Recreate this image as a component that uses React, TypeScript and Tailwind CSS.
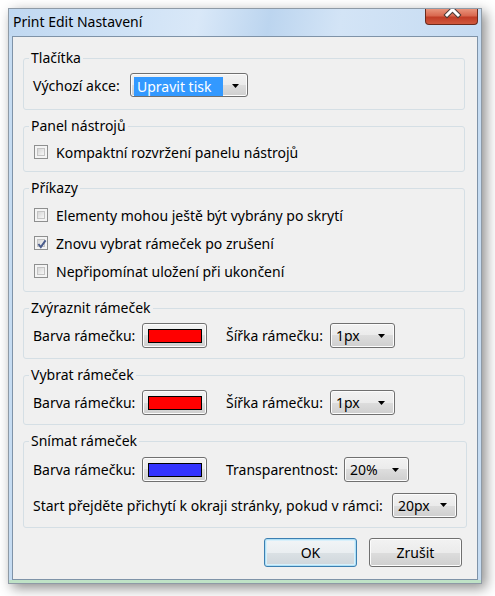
import React from "react";

// Vista-style button face, shared by the colour pickers and drop-downs
const face =
  "rounded-[3px] border border-[#707070] bg-[linear-gradient(180deg,#f2f2f2_0%,#ebebeb_50%,#dddddd_50%,#cfcfcf_100%)] shadow-[inset_0_0_0_1px_#fcfcfc]";

function Arrow() {
  return (
    <svg width="7" height="4" viewBox="0 0 7 4" className="shrink-0">
      <polygon points="0,0 7,0 3.5,4" fill="#000" />
    </svg>
  );
}

function Checkbox({ checked }: { checked?: boolean }) {
  return (
    <div className="ml-[1px] flex h-[14px] w-[14px] shrink-0 items-center justify-center border border-[#8e8f8f] bg-[#f4f4f4] p-[2px]">
      <div className="relative h-full w-full border border-[#c4c4c4] bg-[linear-gradient(135deg,#d6d6d6_0%,#f7f7f7_100%)]">
        {checked && (
          <svg width="14" height="14" viewBox="0 0 14 14" className="absolute left-[-3px] top-[-3px]">
            <path d="M3.4 7 L5.8 10 L10.6 3.4" fill="none" stroke="#4a5c8c" strokeWidth="2" />
          </svg>
        )}
      </div>
    </div>
  );
}

function ColorButton({ color }: { color: string }) {
  return (
    <div className={`${face} flex h-[25px] w-[65px] shrink-0 items-center justify-center`}>
      <div className="h-[14px] w-[54px] border border-black" style={{ background: color }} />
    </div>
  );
}

function Dropdown({ value, width }: { value: string; width: string }) {
  return (
    <div className={`${face} flex h-[25px] shrink-0 items-center justify-between pl-[5px] pr-[9px] ${width}`}>
      <span>{value}</span>
      <Arrow />
    </div>
  );
}

function Group({ title, children, className }: { title: string; children: React.ReactNode; className: string }) {
  return (
    <fieldset className={`rounded-[3px] border border-[#d5dfe5] ${className}`}>
      <legend className="ml-[5px] px-[2px] leading-4">{title}</legend>
      <div className="px-[9px]">{children}</div>
    </fieldset>
  );
}

function CheckRow({ label, checked }: { label: string; checked?: boolean }) {
  return (
    <div className="flex h-[18px] items-center gap-[8px]">
      <Checkbox checked={checked} />
      <span>{label}</span>
    </div>
  );
}

function FrameRow({ color, label, value, labelW, selectW }: { color: string; label: string; value: string; labelW: string; selectW: string }) {
  return (
    <div className="flex h-[25px] items-center">
      <span className="w-[109px] shrink-0">Barva rámečku:</span>
      <ColorButton color={color} />
      <span className={`ml-[19px] shrink-0 ${labelW}`}>{label}</span>
      <Dropdown value={value} width={selectW} />
    </div>
  );
}

export default function App() {
  return (
    <div className="min-h-[596px] bg-white pl-[8px] pt-[8px] font-['Noto_Sans',sans-serif] text-[14px] text-black">
      <div className="flex w-[474px] flex-col border border-[#8e9aa6] bg-[#c6dcf2] shadow-[4px_4px_12px_rgba(0,0,0,0.45)]">
        {/* Title bar */}
        <div className="flex h-[27px] items-start justify-between bg-[linear-gradient(100deg,#c0d8f1_0%,#cfe2f6_25%,#d9e8f8_40%,#bcd5ef_55%,#d3e4f6_70%,#c5dbf2_100%)]">
          <span className="pl-[4px] pt-[4px] leading-[18px]">Print Edit Nastavení</span>
          <div className="mr-[3px] h-[16px] w-[53px] overflow-hidden rounded-b-[4px] border border-t-0 border-[#6b2a1c] bg-[linear-gradient(180deg,#e9947c_0%,#d9684f_45%,#c13d26_55%,#d0583d_100%)]">
            <svg width="53" height="16" viewBox="0 0 53 16">
              <path d="M21 -5 L32 6 M32 -5 L21 6" stroke="#4a3a36" strokeWidth="5" strokeLinecap="square" />
              <path d="M21 -5 L32 6 M32 -5 L21 6" stroke="#ffffff" strokeWidth="3" strokeLinecap="square" />
            </svg>
          </div>
        </div>

        {/* Client area */}
        <div className="mx-[3px] flex flex-col border border-[#7f93a8] bg-[#f0f0f0] pb-[12px] pl-[10px] pr-[12px] pt-[13px]">
          <div className="flex flex-col gap-2">
            <Group title="Tlačítka" className="pb-[12px] pt-[7px]">
              <div className="flex h-[24px] items-center">
                <span className="w-[97px] shrink-0">Výchozí akce:</span>
                <div className={`${face} flex h-[24px] w-[118px] items-stretch pl-[3px] pt-[3px]`}>
                  <div className="flex w-[89px] items-center bg-[#3399ff] pl-[3px] text-white">Upravit tisk</div>
                  <div className="flex flex-1 items-center justify-center pb-[2px]">
                    <Arrow />
                  </div>
                </div>
              </div>
            </Group>

            <Group title="Panel nástrojů" className="pb-[10px] pt-[9px]">
              <CheckRow label="Kompaktní rozvržení panelu nástrojů" />
            </Group>

            <Group title="Příkazy" className="pb-[11px] pt-[10px]">
              <div className="flex flex-col gap-[10px]">
                <CheckRow label="Elementy mohou ještě být vybrány po skrytí" />
                <CheckRow label="Znovu vybrat rámeček po zrušení" checked />
                <CheckRow label="Nepřipomínat uložení při ukončení" />
              </div>
            </Group>

            <Group title="Zvýraznit rámeček" className="pb-[10px] pt-[7px]">
              <FrameRow color="#ff0000" label="Šířka rámečku:" value="1px" labelW="w-[104px]" selectW="w-[65px]" />
            </Group>

            <Group title="Vybrat rámeček" className="pb-[9px] pt-[7px]">
              <FrameRow color="#ff0000" label="Šířka rámečku:" value="1px" labelW="w-[104px]" selectW="w-[65px]" />
            </Group>

            <Group title="Snímat rámeček" className="pb-[10px] pt-[8px]">
              <div className="flex flex-col gap-[11px]">
                <FrameRow color="#3333ff" label="Transparentnost:" value="20%" labelW="w-[118px]" selectW="w-[65px]" />
                <div className="flex h-[24px] items-center">
                  <span className="w-[359px] shrink-0">Start přejděte přichytí k okraji stránky, pokud v rámci:</span>
                  <Dropdown value="20px" width="w-[65px]" />
                </div>
              </div>
            </Group>
          </div>

          {/* Dialog buttons */}
          <div className="mt-[10px] flex justify-end gap-[12px] pr-[3px]">
            <button className="h-[29px] w-[93px] rounded-[3px] border border-[#3c7fb1] bg-[linear-gradient(180deg,#f2f5f7_0%,#eaeef1_50%,#dbe1e5_50%,#cfd6db_100%)] shadow-[inset_0_0_0_1px_#b0e0f6,inset_0_0_0_2px_#d8f0fb]">
              OK
            </button>
            <button className={`${face} h-[29px] w-[93px]`}>Zrušit</button>
          </div>
        </div>

        {/* Bottom frame */}
        <div className="h-[3px] bg-[#bfe2c6]" />
      </div>
    </div>
  );
}
